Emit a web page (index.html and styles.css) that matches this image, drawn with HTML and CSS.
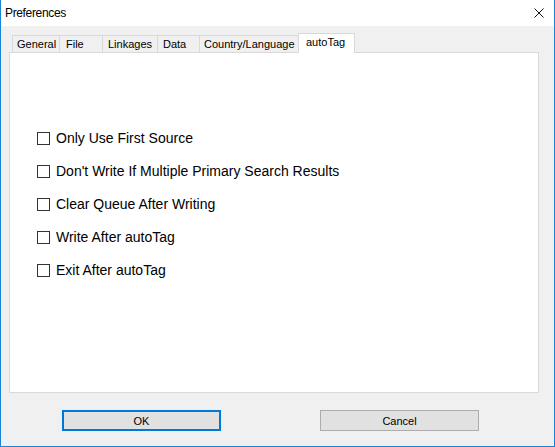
FILE: index.html
```html
<!DOCTYPE html>
<html>
<head>
<meta charset="utf-8">
<title>Preferences</title>
<link rel="stylesheet" href="styles.css">
</head>
<body>
<div class="window">
  <div class="titlebar">
    <span class="title">Preferences</span>
    <svg class="close" width="10" height="10" viewBox="0 0 10 10"><path d="M0.5 0.5 L9.5 9.5 M9.5 0.5 L0.5 9.5" stroke="#111" stroke-width="1" fill="none"/></svg>
  </div>
  <div class="content">
    <div class="tabs">
      <div class="tab t-general">General</div>
      <div class="tab t-file">File</div>
      <div class="tab t-link">Linkages</div>
      <div class="tab t-data">Data</div>
      <div class="tab t-country">Country/Language</div>
      <div class="tab t-auto selected">autoTag</div>
    </div>
    <div class="panel">
      <div class="options">
        <label class="opt"><span class="box"></span><span class="lbl">Only Use First Source</span></label>
        <label class="opt"><span class="box"></span><span class="lbl">Don't Write If Multiple Primary Search Results</span></label>
        <label class="opt"><span class="box"></span><span class="lbl">Clear Queue After Writing</span></label>
        <label class="opt"><span class="box"></span><span class="lbl">Write After autoTag</span></label>
        <label class="opt"><span class="box"></span><span class="lbl">Exit After autoTag</span></label>
      </div>
    </div>
    <div class="buttons">
      <div class="btn default">OK</div>
      <div class="btn">Cancel</div>
    </div>
  </div>
</div>
</body>
</html>
```
FILE: styles.css
```css
* { box-sizing: border-box; }
html, body { margin: 0; padding: 0; }
body {
  width: 555px;
  height: 447px;
  font-family: "Liberation Sans", Arial, sans-serif;
  color: #000;
  background: #f0f0f0;
}
.window {
  width: 555px;
  height: 447px;
  border-left: 1px solid #1883d7;
  border-right: 1px solid #1883d7;
  border-bottom: 1px solid #1883d7;
  display: flex;
  flex-direction: column;
  background: #f0f0f0;
}
.titlebar {
  height: 26px;
  background: #fff;
  display: flex;
  align-items: center;
  padding-left: 4px;
  padding-right: 10px;
}
.title {
  font-size: 12px;
  letter-spacing: -0.35px;
  flex: 1;
}
.close { display: block; margin-top: -1px; }
.content {
  flex: 1;
  display: flex;
  flex-direction: column;
}
.tabs {
  margin-top: 7px;
  height: 20px;
  display: flex;
  align-items: flex-end;
  padding-left: 11px;
  position: relative;
  z-index: 1;
  margin-bottom: -1px;
}
.tab {
  height: 18px;
  font-size: 11px;
  line-height: 16px;
  background: #f0f0f0;
  border: 1px solid #d9d9d9;
  margin-left: -1px;
  white-space: nowrap;
  flex: none;
}
.t-general { margin-left: 0; width: 48px; padding-left: 4px; }
.t-file { width: 44px; padding-left: 6px; }
.t-link { width: 56px; padding-left: 5px; }
.t-data { width: 43px; padding-left: 5px; }
.t-country { width: 100px; padding-left: 4px; }
.tab.selected {
  width: 57px;
  height: 20px;
  background: #fff;
  border-bottom: none;
  padding-left: 7px;
  line-height: 17px;
}
.panel {
  margin-left: 8px;
  width: 530px;
  height: 341px;
  background: #fff;
  border: 1px solid #d9d9d9;
  padding-left: 27px;
  padding-top: 79px;
}
.options {
  display: flex;
  flex-direction: column;
  gap: 20px;
}
.opt {
  display: flex;
  align-items: flex-start;
  height: 13px;
}
.box {
  width: 13px;
  height: 13px;
  border: 1px solid #333;
  background: #fff;
  flex: none;
}
.lbl {
  margin-left: 6px;
  font-size: 14px;
  line-height: 13px;
  white-space: nowrap;
}
.buttons {
  margin-top: 17px;
  display: flex;
  padding-left: 61px;
  gap: 99px;
}
.btn {
  width: 159px;
  height: 21px;
  background: #e1e1e1;
  border: 1px solid #adadad;
  font-size: 11px;
  display: flex;
  align-items: center;
  justify-content: center;
}
.btn.default {
  border: 2px solid #0078d7;
}
```
